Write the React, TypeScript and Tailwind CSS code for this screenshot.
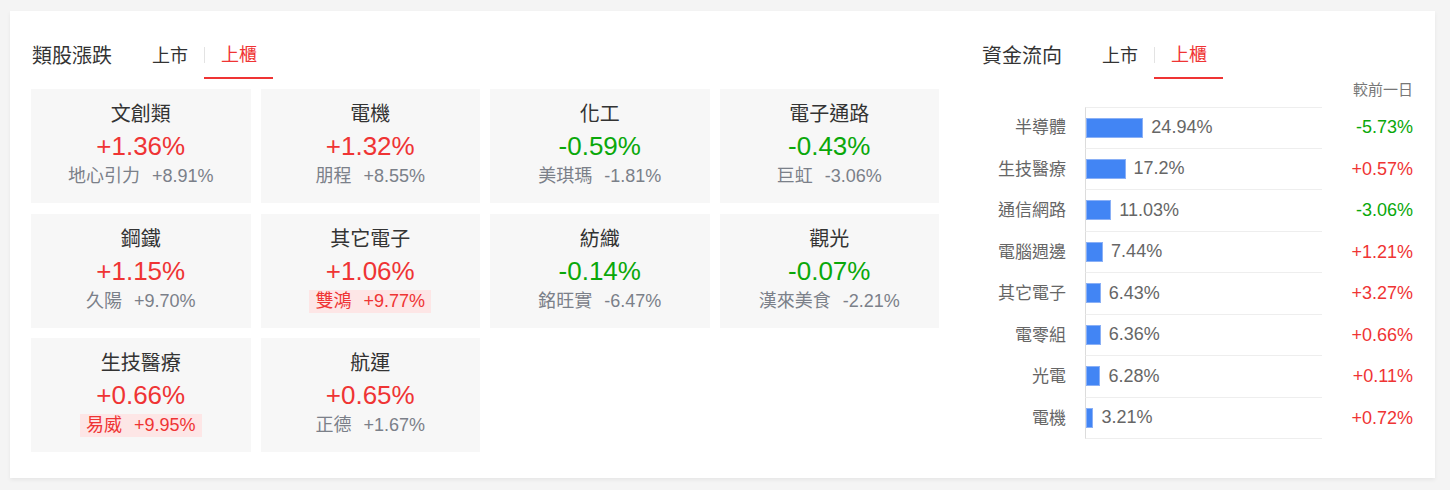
import React from 'react';

interface Sector {
    name: string;
    change: string;
    stock: string;
    stockChange: string;
    limitUp?: boolean;
}

interface Flow {
    name: string;
    share: number;
    change: string;
}

const sectors: Sector[] = [
    { name: '文創類', change: '+1.36%', stock: '地心引力', stockChange: '+8.91%' },
    { name: '電機', change: '+1.32%', stock: '朋程', stockChange: '+8.55%' },
    { name: '化工', change: '-0.59%', stock: '美琪瑪', stockChange: '-1.81%' },
    { name: '電子通路', change: '-0.43%', stock: '巨虹', stockChange: '-3.06%' },
    { name: '鋼鐵', change: '+1.15%', stock: '久陽', stockChange: '+9.70%' },
    { name: '其它電子', change: '+1.06%', stock: '雙鴻', stockChange: '+9.77%', limitUp: true },
    { name: '紡織', change: '-0.14%', stock: '銘旺實', stockChange: '-6.47%' },
    { name: '觀光', change: '-0.07%', stock: '漢來美食', stockChange: '-2.21%' },
    { name: '生技醫療', change: '+0.66%', stock: '易威', stockChange: '+9.95%', limitUp: true },
    { name: '航運', change: '+0.65%', stock: '正德', stockChange: '+1.67%' },
];

const flows: Flow[] = [
    { name: '半導體', share: 24.94, change: '-5.73%' },
    { name: '生技醫療', share: 17.2, change: '+0.57%' },
    { name: '通信網路', share: 11.03, change: '-3.06%' },
    { name: '電腦週邊', share: 7.44, change: '+1.21%' },
    { name: '其它電子', share: 6.43, change: '+3.27%' },
    { name: '電零組', share: 6.36, change: '+0.66%' },
    { name: '光電', share: 6.28, change: '+0.11%' },
    { name: '電機', share: 3.21, change: '+0.72%' },
];

const FONT = { fontFamily: '"Liberation Sans", "Noto Sans CJK TC", sans-serif' };

const upDown = (v: string) => (v.startsWith('-') ? 'text-[#0aa80a]' : 'text-[#ef3434]');

const Header: React.FC<{ title: string }> = ({ title }) => (
    <div className="flex items-end h-[46px]">
        <div className="h-[46px] flex items-center text-[20px] text-[#333] w-[80px]">{title}</div>
        <div className="h-[46px] flex items-center ml-[24px] px-4 text-[18px] text-[#333]">上市</div>
        <div className="h-[46px] flex items-center border-b-2 border-[#ef3434]">
            <span className="h-4 w-px bg-[#e3e3e3]" />
            <span className="px-4 text-[18px] text-[#ef3434]">上櫃</span>
        </div>
    </div>
);

const SectorCard: React.FC<{ s: Sector }> = ({ s }) => (
    <div className="h-[114px] bg-[#f7f7f7] flex flex-col items-center pt-3">
        <div className="text-[20px] leading-[26px] text-[#333]">{s.name}</div>
        <div className={`mt-[2px] text-[26px] leading-[34px] ${upDown(s.change)}`}>{s.change}</div>
        <div
            className={
                s.limitUp
                    ? 'mt-[2px] flex gap-3 px-[6px] text-[18px] leading-[23px] bg-[#fde6e6] text-[#ef3434]'
                    : 'mt-[2px] flex gap-3 px-[6px] text-[18px] leading-[23px] text-[#7b8089]'
            }
        >
            <span>{s.stock}</span>
            <span>{s.stockChange}</span>
        </div>
    </div>
);

export default function App() {
    return (
        <div className="min-h-[490px] bg-[#f4f4f4] pt-[11px] pl-[10px]" style={FONT}>
            <div className="w-[1425px] h-[467px] bg-white shadow-[0_2px_4px_rgba(0,0,0,0.06)] flex pt-[22px] pl-[21px]">
                {/* 類股漲跌 */}
                <div className="w-[908px] pl-px">
                    <Header title="類股漲跌" />
                    <div className="grid grid-cols-4 gap-x-[10px] gap-y-[10.5px] mt-[10px] -ml-px">
                        {sectors.map((s, i) => (
                            <SectorCard key={i} s={s} />
                        ))}
                    </div>
                </div>

                {/* 資金流向 */}
                <div className="w-[431px] ml-[43px]">
                    <Header title="資金流向" />
                    <div className="text-right text-[15px] leading-[22px] text-[#777]">較前一日</div>
                    <div className="mt-[6px]">
                        {flows.map((f, i) => (
                            <div key={i} className="flex h-[41.5px] items-center">
                                <div className="w-[103px] pr-[19px] text-right text-[17px] text-[#666]">{f.name}</div>
                                <div
                                    className={
                                        i === 0
                                            ? 'w-[237px] h-full flex items-center gap-2 border-l border-l-[#dcdcdc] border-y border-y-[#eeeeee]'
                                            : 'w-[237px] h-full flex items-center gap-2 border-l border-l-[#dcdcdc] border-b border-b-[#eeeeee]'
                                    }
                                >
                                    <div
                                        className="h-[20px] bg-[#4285f4] border border-[#8ab0f6]"
                                        style={{ width: `${f.share * 2.3}px` }}
                                    />
                                    <span className="text-[18px] text-[#666]">{f.share}%</span>
                                </div>
                                <div className={`w-[91px] text-right text-[18px] ${upDown(f.change)}`}>{f.change}</div>
                            </div>
                        ))}
                    </div>
                </div>
            </div>
        </div>
    );
}
